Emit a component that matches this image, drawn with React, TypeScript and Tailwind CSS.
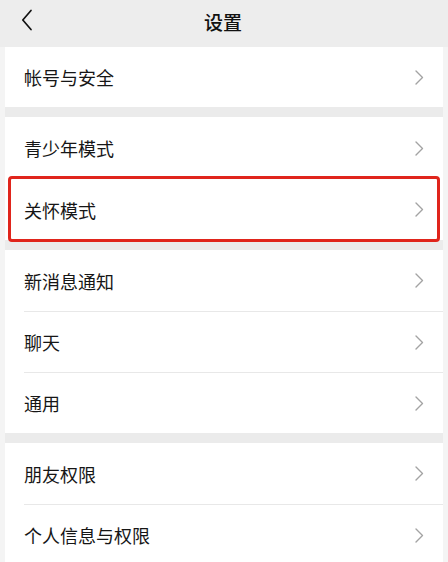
import React from "react";

const font = { fontFamily: '"Noto Sans CJK SC", "Noto Sans", sans-serif' };

function Chevron() {
  return (
    <svg width="9" height="15" viewBox="0 0 9 15" fill="none" className="shrink-0">
      <path d="M1 1 L7.5 7.5 L1 14" stroke="#a3a3a3" strokeWidth="1.4" strokeLinecap="round" strokeLinejoin="round" />
    </svg>
  );
}

function Row({ label, h, divider, highlight }: { label: string; h: string; divider?: boolean; highlight?: boolean }) {
  return (
    <div className={`relative flex flex-col ${h}`}>
      {divider && <div className="ml-[19px] h-px bg-[#e8e8e8]" />}
      <div className="flex flex-1 items-center justify-between pl-[19px] pr-[19px]">
        <span className="text-[18px] leading-none text-[#161616]">{label}</span>
        <Chevron />
      </div>
      {highlight && (
        <div className="absolute left-[3px] right-[3px] top-[-3px] bottom-[-2px] rounded-[4px] border-[3px] border-[#e0251c]" />
      )}
    </div>
  );
}

export default function App() {
  return (
    <div className="w-[448px] h-[562px] overflow-hidden bg-[#f4f4f4]" style={font}>
      <div className="relative flex h-[47px] items-center justify-center bg-[#ededed]">
        <svg width="12" height="22" viewBox="0 0 12 22" fill="none" className="absolute left-[21px] top-[9px]">
          <path d="M10 1.5 L1.8 11 L10 20.5" stroke="#111" strokeWidth="1.7" strokeLinecap="round" strokeLinejoin="round" />
        </svg>
        <span className="text-[19px] font-medium leading-none text-[#111] -ml-[2px] -mt-[4px]">设置</span>
      </div>
      <div className="px-[5px]">
        <div className="flex flex-col gap-[10px] bg-[#ebebeb]">
          <div className="bg-white">
            <Row label="帐号与安全" h="h-[60px]" />
          </div>
          <div className="bg-white">
            <Row label="青少年模式" h="h-[62px]" />
            <Row label="关怀模式" h="h-[61px]" highlight />
          </div>
          <div className="bg-white">
            <Row label="新消息通知" h="h-[61px]" />
            <Row label="聊天" h="h-[61px]" divider />
            <Row label="通用" h="h-[61px]" divider />
          </div>
          <div className="bg-white">
            <Row label="朋友权限" h="h-[61px]" />
            <Row label="个人信息与权限" h="h-[61px]" divider />
          </div>
        </div>
      </div>
    </div>
  );
}
